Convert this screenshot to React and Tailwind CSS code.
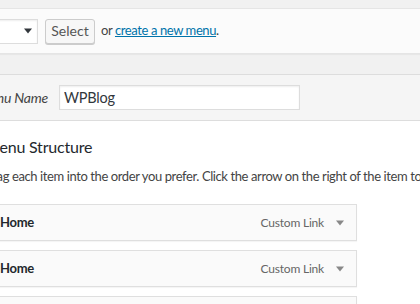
import { useState } from "react";

const items = [
  { title: "Home", type: "Custom Link" },
  { title: "Home", type: "Custom Link" },
  { title: "About", type: "Page" },
];

function Caret({ className }) {
  return (
    <svg viewBox="0 0 8 5" className={className} fill="currentColor">
      <path d="M0 0h8L4 5z" />
    </svg>
  );
}

export default function App() {
  const [name, setName] = useState("WPBlog");

  return (
    <div className="w-[420px] h-[304px] overflow-hidden bg-[#f1f1f1] text-[13px] tracking-[-0.4px] text-[#444] font-['Lato',sans-serif]">
      {/* manage menus bar */}
      <div className="mt-2 h-[46px] flex items-center border-y border-[#e5e5e5] bg-[#fbfbfb] shadow-[0_1px_1px_rgba(0,0,0,0.04)]">
        <div className="ml-[-100px] w-[138px] h-[25px] flex items-center justify-end pr-[5px] bg-white border border-[#ddd] shadow-[inset_0_1px_2px_rgba(0,0,0,0.07)] text-[#32373c]">
          <Caret className="w-[8px] h-[6px]" />
        </div>
        <button className="ml-[7px] h-[25px] w-[50px] rounded-[3px] border border-[#ccc] bg-[#f7f7f7] shadow-[0_1px_0_#ccc] text-[#555] text-[14px] tracking-normal leading-none">
          Select
        </button>
        <span className="ml-[6px] text-[13px]">
          or{" "}
          <a href="#" className="text-[#0073aa] underline">
            create a new menu
          </a>
          .
        </span>
      </div>

      {/* menu edit box */}
      <div className="mt-5 border-t border-[#ddd] bg-white">
        <div className="h-[46px] flex items-center bg-[#f5f5f5] border-b border-[#ddd]">
          <div className="w-[48px] flex justify-end">
            <label className="whitespace-nowrap italic text-[14px] tracking-[-0.2px] text-[#444]">Menu Name</label>
          </div>
          <input
            value={name}
            onChange={(e) => setName(e.target.value)}
            className="ml-[11px] w-[241px] h-[25px] px-[4px] bg-white border border-[#ddd] shadow-[inset_0_1px_2px_rgba(0,0,0,0.07)] text-[14.5px] tracking-[-0.2px] text-[#32373c] outline-none"
          />
        </div>

        <div className="ml-[-15px] pt-[15px]">
          <h3 className="text-[16px] leading-[22px] tracking-[-0.2px] text-[#23282d] font-normal">Menu Structure</h3>
          <p className="mt-[9px] ml-[-2px] whitespace-nowrap leading-[18px]">
            Drag each item into the order you prefer. Click the arrow on the right of the item to reveal additional configuration options.
          </p>

          <ul className="mt-[19px] flex flex-col gap-[9px]">
            {items.map((it, i) => (
              <li
                key={i}
                className="w-[372px] h-[37px] flex items-center justify-between pl-[14px] bg-[#fafafa] border border-[#dfdfdf] shadow-[0_1px_1px_rgba(0,0,0,0.04)]"
              >
                <span className="font-bold text-[#23282d] tracking-[-0.3px]">{it.title}</span>
                <span className="flex items-center">
                  <span className="text-[12px] tracking-[-0.2px] text-[#666]">{it.type}</span>
                  <span className="w-[32px] flex justify-center text-[#888]">
                    <Caret className="w-[8px] h-[6px]" />
                  </span>
                </span>
              </li>
            ))}
          </ul>
        </div>
      </div>
    </div>
  );
}
